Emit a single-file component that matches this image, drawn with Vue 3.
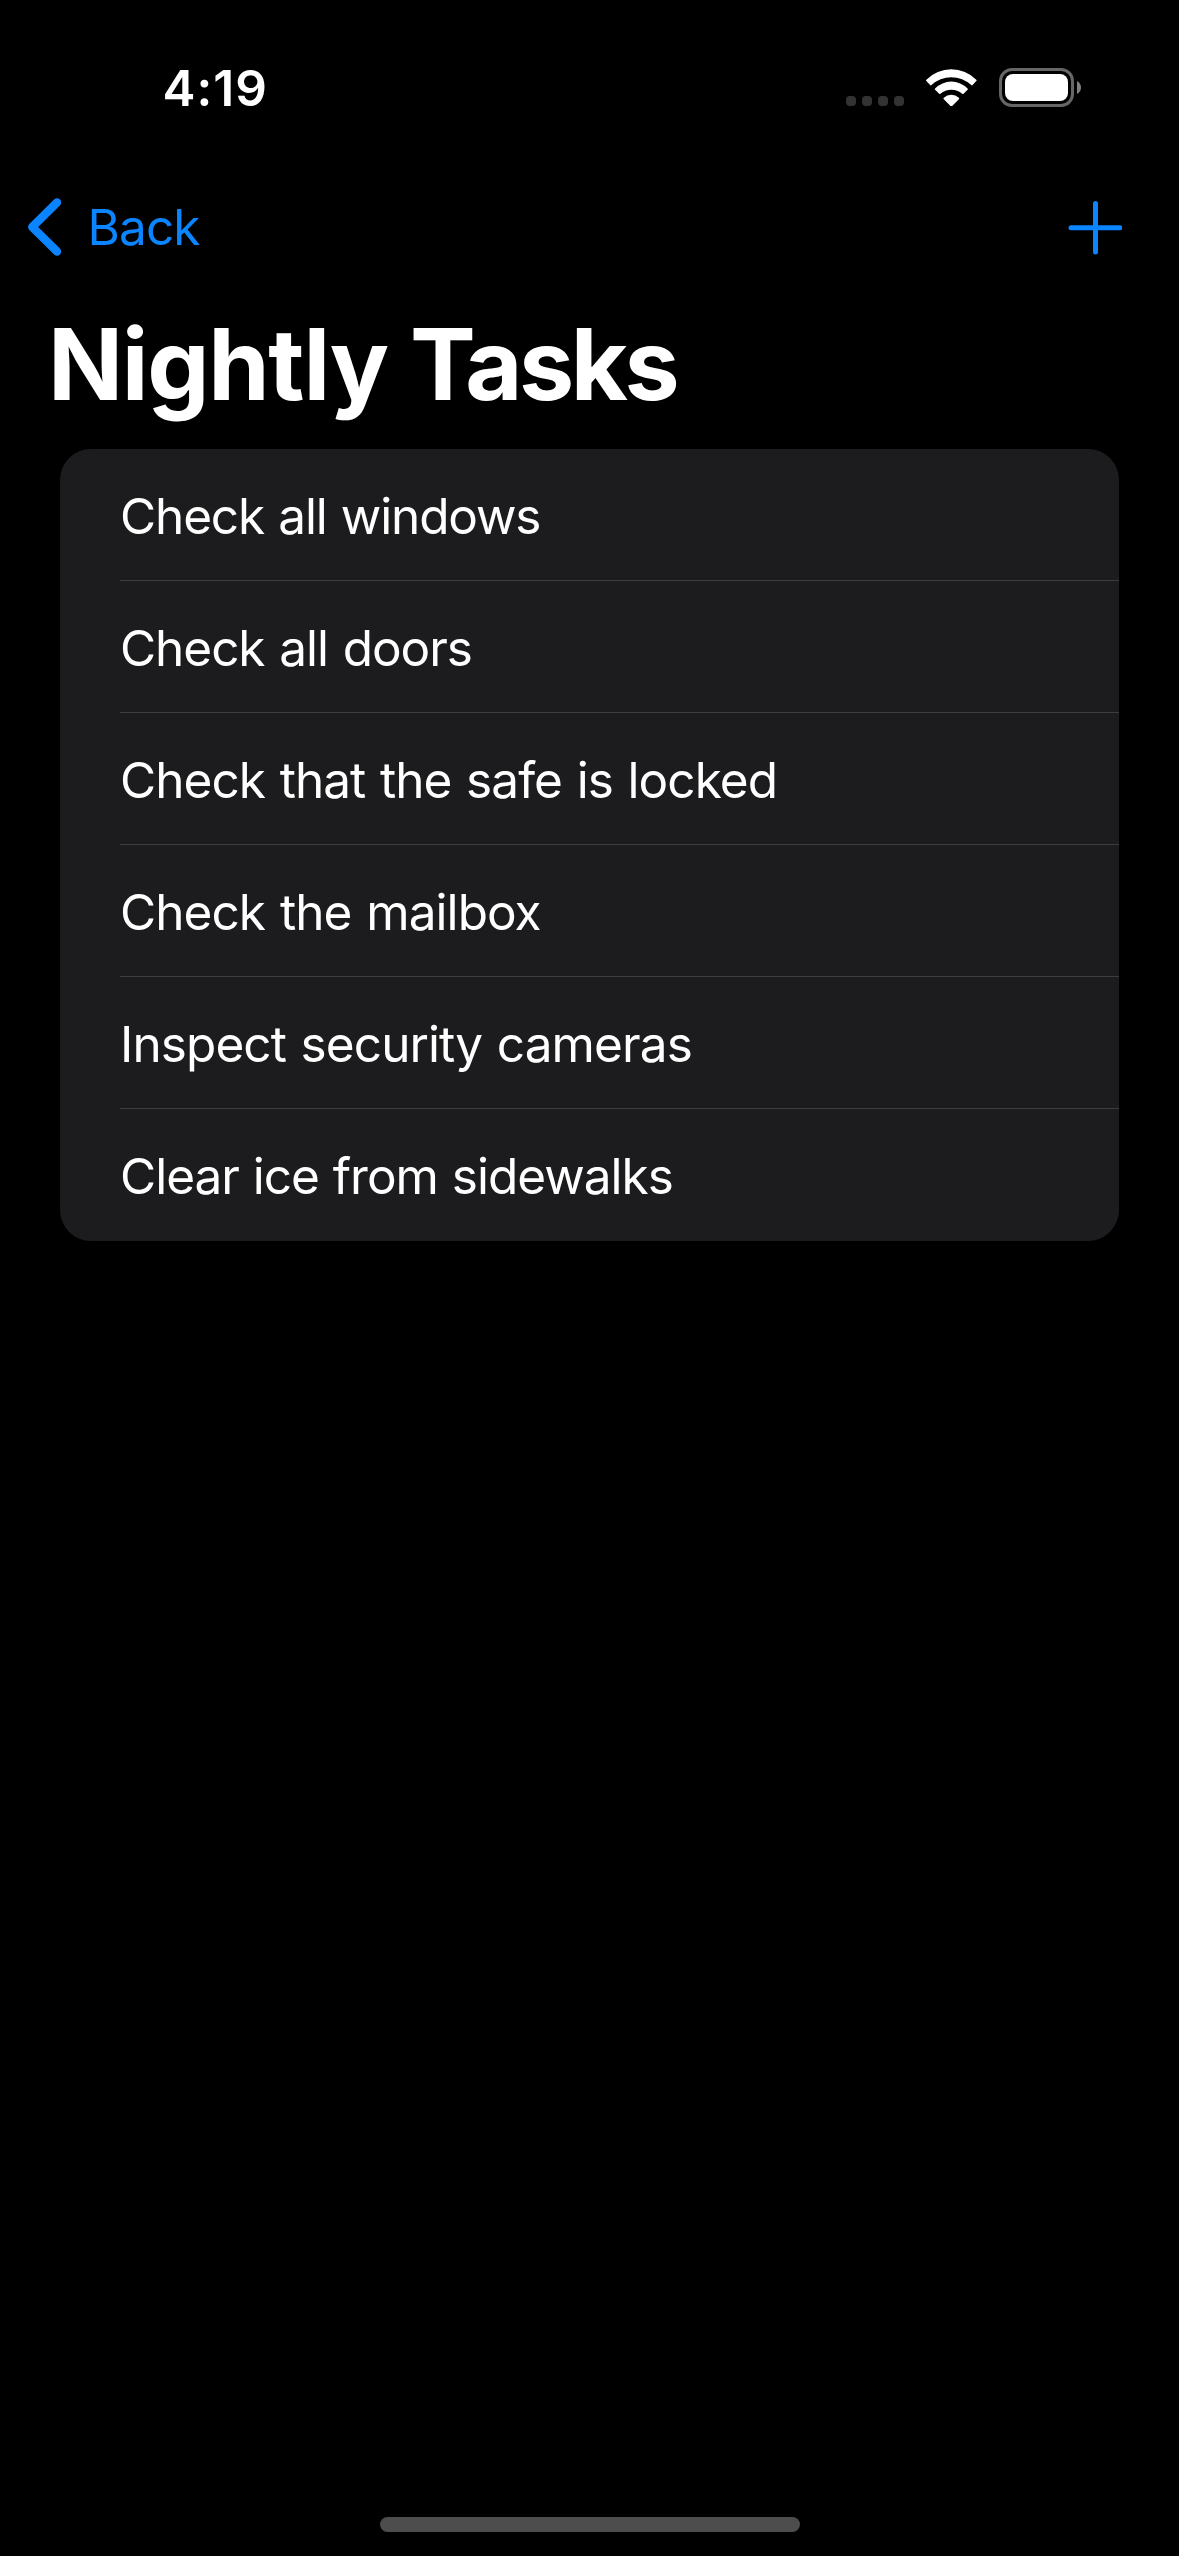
<script setup>
const tasks = [
  { label: 'Check all windows', tracking: -1.15, gap: 1.5 },
  { label: 'Check all doors', tracking: -1.05, gap: 1.9 },
  { label: 'Check that the safe is locked', tracking: -0.95, gap: 1.7 },
  { label: 'Check the mailbox', tracking: -0.95, gap: 1.95 },
  { label: 'Inspect security cameras', tracking: -0.9, gap: 1.55 },
  { label: 'Clear ice from sidewalks', tracking: -1, gap: 0.95 },
]
</script>

<template>
  <div class="screen">
    <header class="status-bar">
      <span class="time">4:19</span>
      <div class="indicators">
        <div class="cellular"><i v-for="n in 4" :key="n" class="dot"></i></div>
        <svg class="wifi" viewBox="0 0 152 112" fill="#fff">
          <path d="M1 32A105 105 0 0 1 150 32Q152 34 150 36L139 48Q137 50 135 48A87 87 0 0 0 16 48Q14 50 12 48L1 36Q-1 34 1 32Z" />
          <path d="M27 58A68 68 0 0 1 124 58Q126 60 124 62L112 74Q110 76 108 74A50 50 0 0 0 43 74Q41 76 39 74L27 62Q25 60 27 58Z" />
          <path d="M53 86A33 33 0 0 1 98 86Q100 88 98 90L77.500 111Q75.500 113 73.500 111L53 90Q51 88 53 86Z" />
        </svg>
        <svg class="battery" viewBox="0 0 83 39">
          <rect x="1.500" y="1.500" width="72" height="36" rx="11.500" fill="none" stroke="#666" stroke-width="3" />
          <rect x="6" y="6" width="63" height="27" rx="8" fill="#fff" />
          <path d="M78 13Q82 15.500 82 19.500T78 26Z" fill="#808080" />
        </svg>
      </div>
    </header>

    <nav class="nav-bar">
      <button class="back" type="button">
        <svg class="chevron" viewBox="0 0 40 60">
          <path d="M33 5.500L8.200 30L33 54.500" />
        </svg>
        <span>Back</span>
      </button>
      <button class="add" type="button" aria-label="Add">
        <svg class="plus" viewBox="0 0 56 56">
          <path d="M5 28.800H53.800M29.500 4.500V53" />
        </svg>
      </button>
    </nav>

    <h1 class="title">Nightly <span class="tight">Tasks</span></h1>

    <ul class="list">
      <li v-for="task in tasks" :key="task.label" class="row">
        <span class="label" :style="{ letterSpacing: task.tracking + 'px', wordSpacing: task.gap + 'px' }">{{ task.label }}</span>
      </li>
    </ul>

    <div class="home-indicator"></div>
  </div>
</template>

<style>
body {
  background: #000;
}
</style>

<style scoped>
.screen {
  box-sizing: border-box;
  display: flex;
  flex-direction: column;
  width: 1179px;
  height: 2556px;
  padding-bottom: 24px;
  background: #000;
  color: #fff;
  font-family: Inter, "Liberation Sans", sans-serif;
  font-size: 49.5px;
  line-height: 60px;
  overflow: hidden;
}

.status-bar {
  box-sizing: border-box;
  display: flex;
  justify-content: space-between;
  height: 177px;
  padding: 58px 97px 0 162.500px;
}

.time {
  font-weight: 600;
  letter-spacing: 1px;
}

.indicators {
  display: flex;
  align-items: flex-start;
}

.cellular {
  display: flex;
  gap: 6px;
  margin: 38px 22px 0 0;
}

.dot {
  width: 10px;
  height: 10px;
  border-radius: 4px;
  background: #333;
}

.wifi {
  width: 51px;
  height: 37.500px;
  margin: 10.500px 22px 0 0;
}

.battery {
  width: 83px;
  height: 39px;
  margin-top: 10px;
}

.nav-bar {
  box-sizing: border-box;
  display: flex;
  align-items: center;
  justify-content: space-between;
  height: 100px;
  padding: 0 57px 0 24px;
}

.back,
.add {
  display: flex;
  align-items: center;
  padding: 0;
  border: 0;
  background: none;
  color: #0a84ff;
  font: inherit;
}

.back {
  gap: 23.500px;
  letter-spacing: -0.9px;
}

.chevron,
.plus {
  fill: none;
  stroke: currentColor;
  stroke-linecap: round;
  stroke-linejoin: round;
}

.chevron {
  width: 40px;
  height: 60px;
  stroke-width: 8.300px;
}

.plus {
  width: 56px;
  height: 56px;
  stroke-width: 5px;
}

.title {
  margin: 27px 0 1px 48px;
  font-size: 98.6px;
  font-weight: 700;
  line-height: 120px;
  letter-spacing: -1.3px;
}

.tight {
  letter-spacing: -3.4px;
}

.list {
  margin: 24px 60px 0;
  padding: 0;
  border-radius: 31px;
  background: #1c1c1e;
  list-style: none;
}

.row {
  padding-left: 60px;
}

.label {
  box-sizing: border-box;
  display: block;
  height: 132px;
  padding-top: 2px;
  border-bottom: 1px solid #3d3d40;
  line-height: 130px;
  white-space: nowrap;
}

.row:last-child .label {
  border-bottom: 0;
}

.home-indicator {
  width: 420px;
  height: 15px;
  margin: auto auto 0;
  border-radius: 7.500px;
  background: #4d4d4d;
}
</style>
